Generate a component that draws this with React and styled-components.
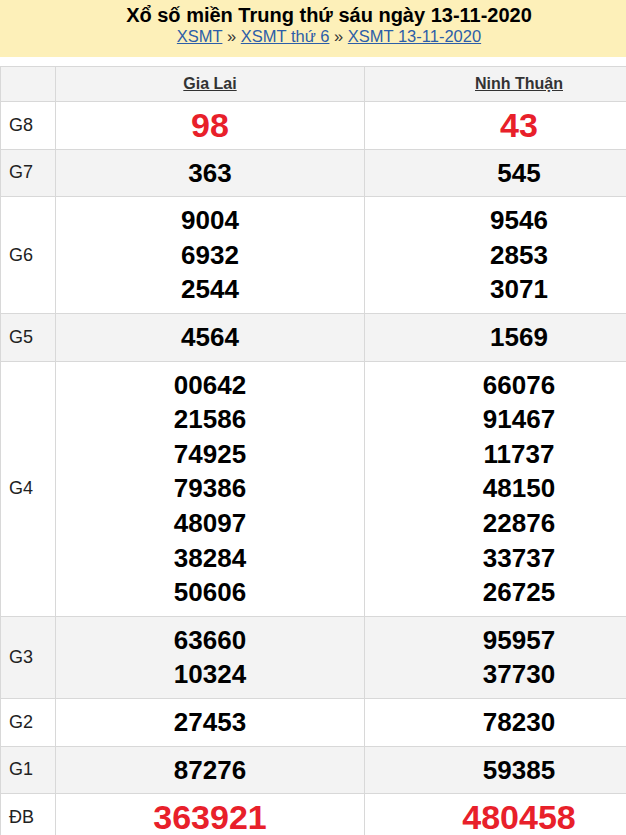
import React from "react"
import styled, { createGlobalStyle } from "styled-components"

const GlobalStyle = createGlobalStyle`
  html, body {
    margin: 0;
    padding: 0;
    background: #fff;
    overflow: hidden;
  }
  body {
    font-family: "Liberation Sans", Arial, sans-serif;
    color: #000;
  }
`

const stations = ["Gia Lai", "Ninh Thuận"]

const prizes = [
  { label: "G8", values: [["98"], ["43"]], big: true },
  { label: "G7", values: [["363"], ["545"]] },
  { label: "G6", values: [["9004", "6932", "2544"], ["9546", "2853", "3071"]] },
  { label: "G5", values: [["4564"], ["1569"]] },
  {
    label: "G4",
    values: [
      ["00642", "21586", "74925", "79386", "48097", "38284", "50606"],
      ["66076", "91467", "11737", "48150", "22876", "33737", "26725"],
    ],
  },
  { label: "G3", values: [["63660", "10324"], ["95957", "37730"]] },
  { label: "G2", values: [["27453"], ["78230"]] },
  { label: "G1", values: [["87276"], ["59385"]] },
  { label: "ĐB", values: [["363921"], ["480458"]], big: true },
]

const App = () => (
  <>
    <GlobalStyle />
    <Page>
      <Banner>
        <Title>Xổ số miền Trung thứ sáu ngày 13-11-2020</Title>
        <Crumbs>
          <Crumb href="#">XSMT</Crumb> » <Crumb href="#">XSMT thứ 6</Crumb> »{" "}
          <Crumb href="#">XSMT 13-11-2020</Crumb>
        </Crumbs>
      </Banner>
      <Results>
        <colgroup>
          <col style={{ width: 55 }} />
          <col style={{ width: 309 }} />
          <col style={{ width: 309 }} />
        </colgroup>
        <thead>
          <HeadRow>
            <HeadCell />
            {stations.map(s => (
              <HeadCell key={s}>
                <StationLink href="#">{s}</StationLink>
              </HeadCell>
            ))}
          </HeadRow>
        </thead>
        <tbody>
          {prizes.map((p, i) => (
            <Row key={p.label} $shaded={i % 2 === 1}>
              <Label>{p.label}</Label>
              {p.values.map((list, j) => (
                <NumCell key={j}>
                  {list.map(n => (
                    <Num key={n} $big={p.big}>{n}</Num>
                  ))}
                </NumCell>
              ))}
            </Row>
          ))}
        </tbody>
      </Results>
    </Page>
  </>
)

export default App

const Page = styled.div`
  width: 658px;
`

const Banner = styled.div`
  background: #fdf0b9;
  text-align: center;
  padding: 4px 0 10px;
  margin-bottom: 9px;
`

const Title = styled.h1`
  margin: 0;
  font-size: 20px;
  line-height: 22px;
  font-weight: bold;
  color: #000;
`

const Crumbs = styled.div`
  font-size: 16.5px;
  line-height: 21px;
  color: #333;
`

const Crumb = styled.a`
  color: #2c5ea8;
  text-decoration: underline;
`

const Results = styled.table`
  width: 673px;
  border-collapse: collapse;
  table-layout: fixed;
`

const HeadRow = styled.tr`
  background: #f3f3f3;
`

const HeadCell = styled.th`
  border: 1px solid #d8d8d8;
  height: 34px;
  padding: 0;
  text-align: center;
  font-size: 16px;
  font-weight: bold;
`

const StationLink = styled.a`
  color: #333;
  text-decoration: underline;
`

const Row = styled.tr`
  background: ${p => (p.$shaded ? "#f3f3f3" : "#fff")};
`

const Label = styled.td`
  border: 1px solid #d8d8d8;
  padding: 0 0 0 8px;
  font-size: 18px;
  color: #222;
  vertical-align: middle;
`

const NumCell = styled.td`
  border: 1px solid #d8d8d8;
  padding: 6px 0;
  text-align: center;
  vertical-align: middle;
`

const Num = styled.div`
  font-size: ${p => (p.$big ? "34px" : "26px")};
  line-height: 34.6px;
  font-weight: bold;
  color: ${p => (p.$big ? "#e8202a" : "#000")};
`
